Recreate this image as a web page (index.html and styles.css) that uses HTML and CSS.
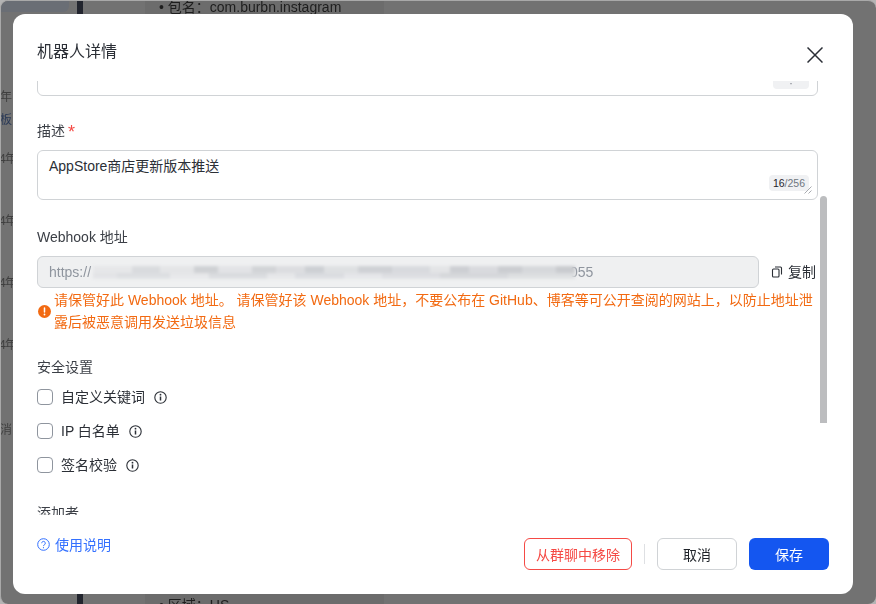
FILE: index.html
```html
<!DOCTYPE html>
<html lang="zh-CN">
<head>
<meta charset="utf-8">
<title>机器人详情</title>
<link rel="stylesheet" href="styles.css">
</head>
<body>
<div class="page">
  <div class="page-corner"></div>
  <div class="page-rail"></div>
  <div class="page-doc"></div>
  <div class="page-text line-top">• 包名：com.burbn.instagram</div>
  <div class="page-text line-bottom">• 区域：US</div>
  <div class="side s1">年</div>
  <div class="side s2">板</div>
  <div class="side s3">4年</div>
  <div class="side s4">4年</div>
  <div class="side s5">4年</div>
  <div class="side s6">4年</div>
  <div class="side s7">消</div>
</div>
<div class="dialog">
  <header class="dialog-head">
    <h1 class="dialog-title">机器人详情</h1>
    <button class="close" aria-label="关闭">
      <svg width="16" height="16" viewBox="0 0 16 16"><path d="M0.5 0.5 15.5 15.5M15.5 0.5 0.5 15.5" stroke="#2b2f36" stroke-width="1.5" fill="none"/></svg>
    </button>
  </header>
  <div class="dialog-body">
    <div class="scroll-content">
      <div class="box box-prev"><span class="counter counter-prev">·</span></div>
      <div class="label label-desc">描述<span class="req">*</span></div>
      <div class="box box-desc">
        AppStore商店更新版本推送
        <span class="counter"><b>16</b>/256</span>
        <svg class="grip" width="8" height="8" viewBox="0 0 8 8"><path d="M0.5 7.500 7.500 0.500M4.500 7.500 7.500 4.500" stroke="#a8abb0" stroke-width="1" fill="none"/></svg>
      </div>
      <div class="label label-hook">Webhook 地址</div>
      <div class="hook-row">
        <div class="hook-input">
          <span>https://</span>
          <span class="hook-blur"></span>
          <span class="hook-end">055</span>
        </div>
        <div class="copy">
          <svg width="12" height="12" viewBox="0 0 12 12" fill="none" stroke="#2b2f36" stroke-width="1.100"><rect x="1.500" y="3" width="6.500" height="8" rx="1"/><path d="M4 1H9.500a1 1 0 0 1 1 1V8.500"/></svg>
          <span>复制</span>
        </div>
      </div>
      <div class="warn">
        <svg class="warn-icon" width="13" height="13" viewBox="0 0 13 13"><circle cx="6.500" cy="6.500" r="6.500" fill="#f26a12"/><path d="M6.500 3v4" stroke="#fff" stroke-width="1.500" stroke-linecap="round"/><circle cx="6.500" cy="9.500" r=".9" fill="#fff"/></svg>
        <p class="warn-text">请保管好此 Webhook 地址。 请保管好该 Webhook 地址，不要公布在 GitHub、博客等可公开查阅的网站上，以防止地址泄露后被恶意调用发送垃圾信息</p>
      </div>
      <div class="label label-sec">安全设置</div>
      <label class="check"><span class="checkbox"></span><span>自定义关键词</span>
        <svg class="info" width="13" height="13" viewBox="0 0 13 13"><circle cx="6.500" cy="6.500" r="5.700" fill="none" stroke="#2b2f36" stroke-width="1.100"/><path d="M6.500 5.500v4" stroke="#2b2f36" stroke-width="1.500"/><circle cx="6.500" cy="3.700" r=".9" fill="#2b2f36"/></svg></label>
      <label class="check"><span class="checkbox"></span><span>IP 白名单</span>
        <svg class="info" width="13" height="13" viewBox="0 0 13 13"><circle cx="6.500" cy="6.500" r="5.700" fill="none" stroke="#2b2f36" stroke-width="1.100"/><path d="M6.500 5.500v4" stroke="#2b2f36" stroke-width="1.500"/><circle cx="6.500" cy="3.700" r=".9" fill="#2b2f36"/></svg></label>
      <label class="check"><span class="checkbox"></span><span>签名校验</span>
        <svg class="info" width="13" height="13" viewBox="0 0 13 13"><circle cx="6.500" cy="6.500" r="5.700" fill="none" stroke="#2b2f36" stroke-width="1.100"/><path d="M6.500 5.500v4" stroke="#2b2f36" stroke-width="1.500"/><circle cx="6.500" cy="3.700" r=".9" fill="#2b2f36"/></svg></label>
      <div class="label label-adder">添加者</div>
    </div>
    <div class="scrollbar"></div>
  </div>
  <footer class="dialog-foot">
    <a class="help">
      <svg width="13" height="13" viewBox="0 0 13 13" fill="none" stroke="#3370ff"><circle cx="6.500" cy="6.500" r="5.800" stroke-width="1"/><path d="M4.700 5.200a1.800 1.800 0 1 1 2.800 1.500c-.7.400-1 .7-1 1.400" stroke-width="1"/><circle cx="6.500" cy="9.700" r=".6" fill="#3370ff" stroke="none"/></svg>
      <span>使用说明</span>
    </a>
    <div class="actions">
      <button class="btn btn-danger">从群聊中移除</button>
      <span class="divider"></span>
      <button class="btn btn-plain">取消</button>
      <button class="btn btn-primary">保存</button>
    </div>
  </footer>
</div>
</body>
</html>
```
FILE: styles.css
```css
* { box-sizing: border-box; }
html, body { margin: 0; height: 100%; overflow: hidden; }
body {
  background: #b4b4b4;
  font-family: "Liberation Sans", "Noto Sans CJK SC", sans-serif;
  color: #2b2f36;
}
.page { position: fixed; inset: 0; background: #727272; border-top: 1px solid #a9a9a9; border-left: 1px solid #a9a9a9; border-radius: 8px; overflow: hidden; }
.page-corner { position: absolute; left: -1px; top: -1px; width: 69px; height: 12px; background: #6a6e75; border-radius: 0 0 6px 0; }
.page-rail { position: absolute; left: 76px; top: 0; width: 6px; height: 604px; background: #22252e; }
.page-doc { position: absolute; left: 144px; top: 0; width: 239px; height: 604px; background: #6c6c6c; }
.page-text { position: absolute; left: 158px; font-size: 14px; color: #1e1e1e; white-space: nowrap; }
.line-top { top: -5px; }
.line-bottom { top: 593px; }
.side { position: absolute; left: -1px; font-size: 12px; color: #3f3f3f; white-space: nowrap; }
.s1 { top: 86px; }
.s2 { top: 109px; color: #2b3a57; }
.s3 { top: 148px; left: -2px; letter-spacing: -1px; }
.s4 { top: 210px; left: -2px; letter-spacing: -1px; }
.s5 { top: 272px; left: -2px; letter-spacing: -1px; }
.s6 { top: 334px; left: -2px; letter-spacing: -1px; }
.s7 { top: 419px; }

.dialog {
  position: fixed; left: 13px; top: 14px; width: 840px; height: 580px;
  background: #fff; border-radius: 12px;
  display: flex; flex-direction: column; overflow: hidden;
}
.dialog-head { flex: none; height: 67px; padding: 28px 30px 0 24px; display: flex; justify-content: space-between; align-items: flex-start; }
.dialog-title { margin: 0; font-size: 16px; line-height: 20px; font-weight: 400; color: #2b2f36; }
.close { border: 0; padding: 0; background: none; width: 16px; height: 16px; margin-top: 5px; display: block; }
.close svg { display: block; }

.dialog-body { flex: none; height: 434px; position: relative; overflow: hidden; padding: 0 35px 0 24px; }
.scroll-content { display: flex; flex-direction: column; }
.box { border: 1px solid #d0d3d6; border-radius: 6px; position: relative; background: #fff; }
.box-prev { height: 50px; margin-top: -35px; }
.box-desc { height: 50px; padding: 5px 11px; font-size: 14px; line-height: 20px; color: #2b2f36; }
.counter { position: absolute; right: 8px; bottom: 8px; height: 16px; padding: 0 4px; border-radius: 4px; background: #f0f1f3; font-size: 10.5px; line-height: 16px; color: #6f7680; }
.counter b { font-weight: 400; color: #1f2329; }
.counter-prev { width: 36px; height: 11px; bottom: 6px; line-height: 10px; text-align: center; }
.grip { position: absolute; right: 5px; bottom: 5px; }
.label { font-size: 14px; line-height: 20px; color: #3b3f46; }
.label-desc { margin-top: 25px; margin-bottom: 9px; }
.req { color: #f54a45; margin-left: 3px; font-size: 18px; line-height: 0; position: relative; top: 2px; }
.label-hook { margin-top: 27px; margin-bottom: 9px; }
.hook-row { display: flex; align-items: center; }
.hook-input {
  width: 722px; height: 32px; border: 1px solid #d0d3d6; border-radius: 6px; background: #eff0f1;
  padding: 0 11px; display: flex; align-items: center; font-size: 14px; color: #8f959e;
}
.hook-blur {
  width: 482px; height: 13px; flex: none; margin-left: 2px;
  background:
    linear-gradient(90deg, #e6e7e9 0 8%, #d9dbde 8% 14%, #e4e5e7 14% 21%, #cfd1d4 21% 26%, #e2e3e6 26% 33%, #d2d4d7 33% 38%, #dcdde0 38% 44%, #cdd0d4 44% 48%, #dee0e2 48% 55%, #cfd1d5 55% 62%, #d8dade 62% 70%, #e3e4e6 70% 74%, #cdcfd3 74% 78%, #d9dade 78% 84%, #cbcdd1 84% 89%, #d6d8db 89% 96%, #c9cbcf 96% 100%) top / 100% 55% no-repeat,
    linear-gradient(90deg, #e2e3e6 0 5%, #dcdee1 5% 16%, #e6e7e9 16% 24%, #d9dbde 24% 36%, #e5e6e8 36% 42%, #dadce0 42% 52%, #e4e5e8 52% 60%, #dcdde1 60% 72%, #d5d7da 72% 86%, #dcdee0 86% 100%) bottom / 100% 50% no-repeat;
  filter: blur(1.5px);
}
.hook-end { margin-left: -5px; }
.copy { margin-left: 12px; display: flex; align-items: center; gap: 5px; font-size: 14px; line-height: 20px; color: #2b2f36; }
.copy svg { display: block; }
.warn { display: flex; align-items: center; gap: 3px; margin-top: 1px; margin-left: 1px; }
.warn-icon { flex: none; }
.warn-text { margin: 0; font-size: 14px; line-height: 22px; color: #f26a12; width: 760px; }
.label-sec { margin-top: 24px; margin-bottom: 9px; }
.check { display: flex; align-items: center; height: 20px; margin-bottom: 14px; font-size: 14px; color: #2b2f36; }
.checkbox { width: 16px; height: 16px; border: 1px solid #8f959e; border-radius: 4px; margin: 2px 8px 0 0; flex: none; background: #fff; }
.info { margin: 2px 0 0 9px; flex: none; }
.label-adder { margin-top: 15px; }
.scrollbar { position: absolute; right: 26px; top: 115px; width: 7px; height: 227px; border-radius: 4px 4px 0 0; background: #bcbdbf; }

.dialog-foot { flex: 1; display: flex; justify-content: space-between; padding: 0 24px; position: relative; }
.help { display: flex; align-items: center; gap: 5px; height: 20px; margin-top: 19px; font-size: 14px; color: #3370ff; }
.help svg { display: block; }
.actions { display: flex; align-items: center; height: 32px; margin-top: 23px; }
.btn { height: 32px; border-radius: 6px; font: 14px "Liberation Sans", "Noto Sans CJK SC", sans-serif; padding: 0; background: #fff; }
.btn-danger { width: 108px; border: 1px solid #f54a45; color: #f54a45; }
.divider { width: 1px; height: 20px; background: #dee0e3; margin: 0 12px; }
.btn-plain { width: 80px; border: 1px solid #d0d3d6; color: #1f2329; }
.btn-primary { width: 80px; margin-left: 12px; border: 0; background: #1456f0; color: #fff; }
```
